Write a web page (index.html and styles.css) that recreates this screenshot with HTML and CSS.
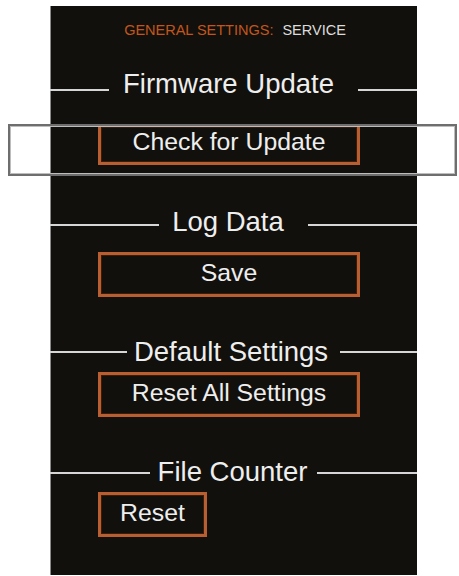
FILE: index.html
```html
<!DOCTYPE html>
<html lang="en">
<head>
<meta charset="utf-8">
<title>General Settings: Service</title>
<link rel="stylesheet" href="styles.css">
</head>
<body>
<div class="panel">
  <div class="title"><span class="title-cat">GENERAL SETTINGS:</span><span class="title-page">SERVICE</span></div>

  <div class="heading heading-firmware">
    <span class="rule"></span><span class="heading-text">Firmware Update</span><span class="rule"></span>
  </div>
  <div class="btn btn-wide btn-first">Check for Update</div>

  <div class="heading heading-log">
    <span class="rule"></span><span class="heading-text">Log Data</span><span class="rule"></span>
  </div>
  <div class="btn btn-wide btn-log">Save</div>

  <div class="heading heading-default">
    <span class="rule"></span><span class="heading-text">Default Settings</span><span class="rule"></span>
  </div>
  <div class="btn btn-wide btn-close">Reset All Settings</div>

  <div class="heading heading-counter">
    <span class="rule"></span><span class="heading-text">File Counter</span><span class="rule"></span>
  </div>
  <div class="btn btn-small btn-close">Reset</div>
</div>
<div class="focus-frame"></div>
</body>
</html>
```
FILE: styles.css
```css
html, body {
  margin: 0;
  padding: 0;
  background: #ffffff;
}
body {
  width: 459px;
  height: 576px;
  position: relative;
  overflow: hidden;
  font-family: "Liberation Sans", Arial, sans-serif;
}
.panel {
  box-sizing: border-box;
  margin: 6px 0 0 50px;
  width: 367px;
  height: 569px;
  background: #12100c;
  border-left: 1px solid #8a8a8a;
  padding-top: 16px;
  display: flex;
  flex-direction: column;
}
.title {
  font-size: 14.5px;
  line-height: 17px;
  height: 17px;
  text-align: center;
  padding-left: 2px;
  white-space: nowrap;
}
.title-cat {
  color: #c2561c;
}
.title-page {
  color: #dcdcdc;
  margin-left: 9px;
}
.heading {
  display: flex;
  align-items: flex-start;
  height: 28px;
  margin-left: -1px;
}
.heading-text {
  font-size: 27.5px;
  line-height: 28px;
  margin-top: 1px;
  color: #eeeeee;
  white-space: nowrap;
}
.rule {
  flex: 1;
  height: 2px;
  background: #d6d6d6;
}
.heading-firmware { margin-top: 30px; }
.heading-firmware .heading-text { padding: 0 24px 0 14px; }
.heading-firmware .rule { margin-top: 20px; }

.heading-log { margin-top: 42px; }
.heading-log .heading-text { padding: 0 24px 0 13px; }
.heading-log .rule { margin-top: 16.5px; }

.heading-default { margin-top: 40px; }
.heading-default .heading-text { padding: 0 12px 0 7px; }
.heading-default .rule { margin-top: 14px; }

.heading-counter { margin-top: 40px; }
.heading-counter .heading-text { padding: 0 10px 0 8px; }
.heading-counter .rule { margin-top: 15px; }

.btn {
  box-sizing: border-box;
  height: 45px;
  margin-left: 47px;
  border: 3px solid #b85e30;
  box-shadow: inset 0 0 0 1px #3a1c0e;
  color: #eeeeee;
  font-size: 24.8px;
  line-height: 36px;
  padding-bottom: 3px;
  text-align: center;
  white-space: nowrap;
}
.btn-wide { width: 262px; }
.btn-small { width: 109px; }
.btn-first {
  margin-top: 27px;
  height: 41px;
  line-height: 30px;
  padding-bottom: 5px;
}
.btn-log { margin-top: 17px; }
.btn-close { margin-top: 7px; }

.focus-frame {
  position: absolute;
  left: 8px;
  top: 124px;
  width: 449px;
  height: 52px;
  box-sizing: border-box;
  border: 2px solid #6e6e6e;
  box-shadow: inset 0 0 0 1px #bdbdbd;
  pointer-events: none;
}
```
